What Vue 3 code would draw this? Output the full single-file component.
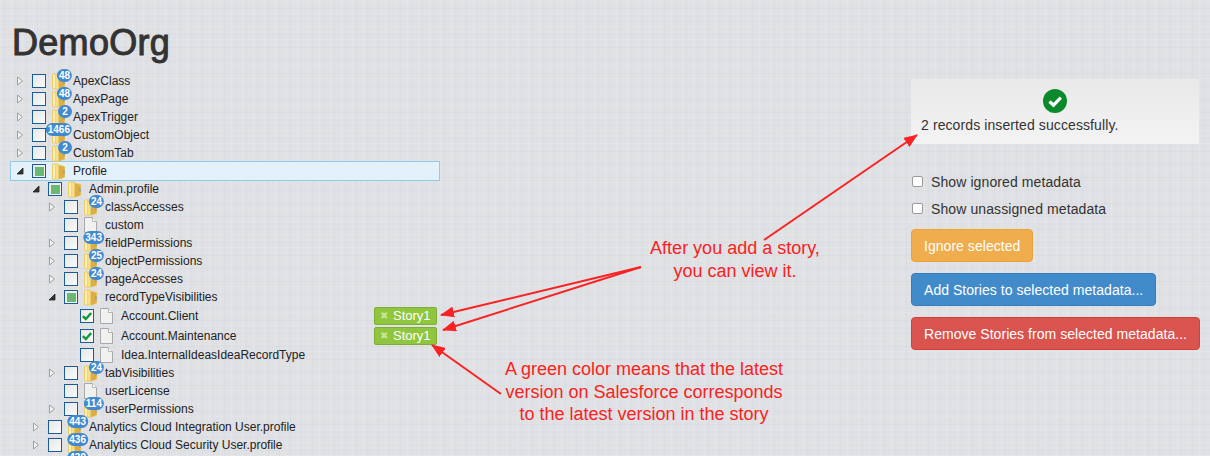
<script setup>
const rows = [
  { l: 0, name: 'ApexClass', n: 48, arrow: 'closed' },
  { l: 0, name: 'ApexPage', n: 48, arrow: 'closed' },
  { l: 0, name: 'ApexTrigger', n: 2, arrow: 'closed' },
  { l: 0, name: 'CustomObject', n: 1466, arrow: 'closed' },
  { l: 0, name: 'CustomTab', n: 2, arrow: 'closed' },
  { l: 0, name: 'Profile', arrow: 'open', state: 'part', selected: true },
  { l: 1, name: 'Admin.profile', arrow: 'open', state: 'part' },
  { l: 2, name: 'classAccesses', n: 24, arrow: 'closed' },
  { l: 2, name: 'custom', file: true },
  { l: 2, name: 'fieldPermissions', n: 343, arrow: 'closed' },
  { l: 2, name: 'objectPermissions', n: 25, arrow: 'closed' },
  { l: 2, name: 'pageAccesses', n: 24, arrow: 'closed' },
  { l: 2, name: 'recordTypeVisibilities', arrow: 'open', state: 'part' },
  { l: 3, name: 'Account.Client', file: true, state: 'on', story: 'Story1', tall: true },
  { l: 3, name: 'Account.Maintenance', file: true, state: 'on', story: 'Story1', tall: true },
  { l: 3, name: 'Idea.InternalIdeasIdeaRecordType', file: true },
  { l: 2, name: 'tabVisibilities', n: 24, arrow: 'closed' },
  { l: 2, name: 'userLicense', file: true },
  { l: 2, name: 'userPermissions', n: 114, arrow: 'closed' },
  { l: 1, name: 'Analytics Cloud Integration User.profile', n: 443, arrow: 'closed' },
  { l: 1, name: 'Analytics Cloud Security User.profile', n: 436, arrow: 'closed' },
  { l: 1, name: '', n: 439, arrow: 'closed' }
]
</script>

<template>
  <div class="page">
    <div class="left">
      <h1 class="org">DemoOrg</h1>
      <div class="tree">
        <div
          v-for="(r, i) in rows"
          :key="i"
          class="row"
          :class="{ selected: r.selected, tall: r.tall }"
          :style="{ paddingLeft: 2 + r.l * 16 + 'px' }"
        >
          <span class="arrow">
            <svg v-if="r.arrow === 'closed'" viewBox="0 0 8 10" width="8" height="10"><path d="M1.5 1 L6.5 5 L1.5 9 Z" fill="#f2f2f2" stroke="#a0a0a0" stroke-width="1"/></svg>
            <svg v-if="r.arrow === 'open'" viewBox="0 0 8 8" width="8" height="8"><path d="M7 1 L7 7 L1 7 Z" fill="#333" stroke="#222" stroke-width=".8"/></svg>
          </span>
          <span class="check">
            <span v-if="r.state === 'part'" class="fill" />
            <svg v-if="r.state === 'on'" viewBox="0 0 12 12" width="12" height="12"><path d="M1.8 6.2 L4.8 9 L10.2 3" fill="none" stroke="#18963c" stroke-width="2.4"/></svg>
          </span>
          <span class="node">
            <svg v-if="r.file" viewBox="0 0 13 16" width="13" height="16"><path d="M.5.5 H8.5 L12.5 4.5 V15.5 H.5 Z" fill="#f1f1ef" stroke="#a9a9a9"/><path d="M8.5.5 V4.5 H12.5" fill="#fff" stroke="#b5b5b5"/></svg>
            <svg v-else viewBox="0 0 13 17" width="13" height="17">
              <path d="M0 1.5 Q0 .5 1.5 .5 H6 L7 1.5 L12.5 3 Q13 3.2 13 4 V14 Q13 14.6 12 15 L7 16.5 H1.5 Q0 16.5 0 15 Z" fill="#eccb6c"/>
              <path d="M1 1.5 H3 V15.5 H1 Z" fill="#fbeeb2"/>
              <path d="M3.5 1.5 H6 V15.5 H3.5 Z" fill="#f7de8c"/>
              <path d="M7 2.5 L12.5 4 V14 L7 16 Z" fill="#dcae45"/>
              <path d="M11.5 7 H12.5 V11 H11.5 Z" fill="#6f9bc0"/>
            </svg>
            <span v-if="r.n" class="count">{{ r.n }}</span>
          </span>
          <span class="name">{{ r.name }}</span>
          <span v-if="r.story" class="story"><span class="x">✖</span>{{ r.story }}</span>
        </div>
      </div>
    </div>

    <div class="right">
      <div class="alert">
        <svg class="ok" viewBox="0 0 24 24" width="24" height="24"><circle cx="12" cy="12" r="12" fill="#0b8a2c"/><path d="M6.5 12.5 L10.5 16.2 L17.8 8.6" fill="none" stroke="#fff" stroke-width="3.2"/></svg>
        <div class="alert-text">2 records inserted successfully.</div>
      </div>
      <label class="opt first"><span class="box" />Show ignored metadata</label>
      <label class="opt"><span class="box" />Show unassigned metadata</label>
      <div class="btn orange">Ignore selected</div>
      <div class="btn blue">Add Stories to selected metadata...</div>
      <div class="btn red">Remove Stories from selected metadata...</div>
    </div>

    <svg class="marks" viewBox="0 0 1210 456" width="1210" height="456">
      <defs>
        <marker id="head" markerWidth="14" markerHeight="11" refX="13" refY="5.5" orient="auto" markerUnits="userSpaceOnUse">
          <path d="M0 0 L14 5.5 L0 11 Z" fill="#fa2222"/>
        </marker>
      </defs>
      <g stroke="#fa2222" stroke-width="2" fill="none">
        <path d="M641 267 L441 315" marker-end="url(#head)"/>
        <path d="M641 267 L443 330" marker-end="url(#head)"/>
        <path d="M501 394 L432 345" marker-end="url(#head)"/>
        <path d="M764 240 L917 135" marker-end="url(#head)"/>
      </g>
    </svg>
    <div class="note note-a">After you add a story,<br>you can view it.</div>
    <div class="note note-b">A green color means that the latest<br>version on Salesforce corresponds<br>to the latest version in the story</div>
  </div>
</template>

<style scoped>
.page{position:relative;width:1210px;height:456px;overflow:hidden;display:flex;justify-content:space-between;font-family:'Liberation Sans',Arial,sans-serif;color:#333;background-color:#dfe1e4;background-image:repeating-linear-gradient(90deg,rgba(255,255,255,.12) 0 1px,transparent 1px 4px,rgba(120,125,135,.04) 4px 5px,transparent 5px 11px),repeating-linear-gradient(0deg,rgba(255,255,255,.1) 0 1px,transparent 1px 5px,rgba(120,125,135,.04) 5px 6px,transparent 6px 13px)}
.left{width:440px}
.org{margin:0;padding:23px 0 0 12px;height:49px;font-size:36px;line-height:40px;font-weight:400;letter-spacing:.3px;color:#333;-webkit-text-stroke:1px #333}
.tree{margin-left:10px;width:430px}
.row{display:flex;align-items:center;height:18px;font-size:12px;color:#222;white-space:nowrap}
.row.tall{height:20px}
.row.selected{height:20px;margin:-1px 0;background:#e3f1fa;border:1px solid #92cbe9;box-sizing:border-box}
.row.selected .arrow{margin-left:-1px}
.arrow{flex:none;width:16px;margin-right:4px;display:flex;align-items:center;justify-content:center}
.check{flex:none;display:flex;align-items:center;justify-content:center;box-sizing:border-box;width:14px;height:14px;border:1.5px solid #1c5b94;background:linear-gradient(135deg,#e6e7e8,#fafafa)}
.fill{width:9px;height:9px;background:#6bb872}
.node{position:relative;flex:none;display:flex;align-items:center;width:13px;height:17px;margin:0 8px 0 6px}
.count{position:absolute;top:-4px;left:20px;transform:translateX(-100%);min-width:14px;box-sizing:border-box;padding:0 2px;height:13px;border-radius:7px;background:#418ad0;color:#fff;font-size:10px;font-weight:700;line-height:13px;text-align:center}
.name{flex:none}
.story{display:flex;align-items:center;box-sizing:border-box;margin:-1px 3px 0 auto;width:63px;height:18px;padding-left:5px;background:#8fc63e;border:1px solid #7fae38;border-radius:2px;color:#fff;font-size:13px}
.x{font-size:10px;color:#c8e596;margin-right:5px}
.right{display:flex;flex-direction:column;align-items:flex-start;width:299px;padding-top:79px;box-sizing:border-box;font-size:14px}
.alert{position:relative;box-sizing:border-box;width:288px;height:65px;border-radius:2px;padding:38px 10px 0;background:linear-gradient(180deg,#e9e9e9,#f3f3f3);line-height:16px;letter-spacing:.1px;white-space:nowrap}
.ok{position:absolute;top:10px;left:132px}
.opt{display:flex;align-items:center;height:27px;margin-left:1px;color:#333;letter-spacing:.1px}
.opt.first{margin-top:24px}
.box{box-sizing:border-box;width:11px;height:11px;margin-right:8px;background:#fff;border:1px solid #9a9a9a;border-radius:2px}
.btn{box-sizing:border-box;height:33px;padding:0 12px;border-radius:4px;border:1px solid;display:flex;align-items:center;color:#fff;font-size:14px;letter-spacing:.04px;white-space:nowrap}
.orange{margin-top:7px;background:#f0ad4e;border-color:#eea236}
.blue{margin-top:11px;background:#428bca;border-color:#357ebd}
.red{margin-top:11px;background:#d9534f;border-color:#d43f3a}
.marks{position:absolute;left:0;top:0;pointer-events:none}
.note{position:absolute;color:#fa2222;font-size:18px;line-height:22.5px;text-align:center;white-space:nowrap}
.note-a{left:635px;top:237px;width:200px}
.note-b{left:494px;top:358px;width:300px}
</style>

<style>
html,body{margin:0;padding:0}
</style>
